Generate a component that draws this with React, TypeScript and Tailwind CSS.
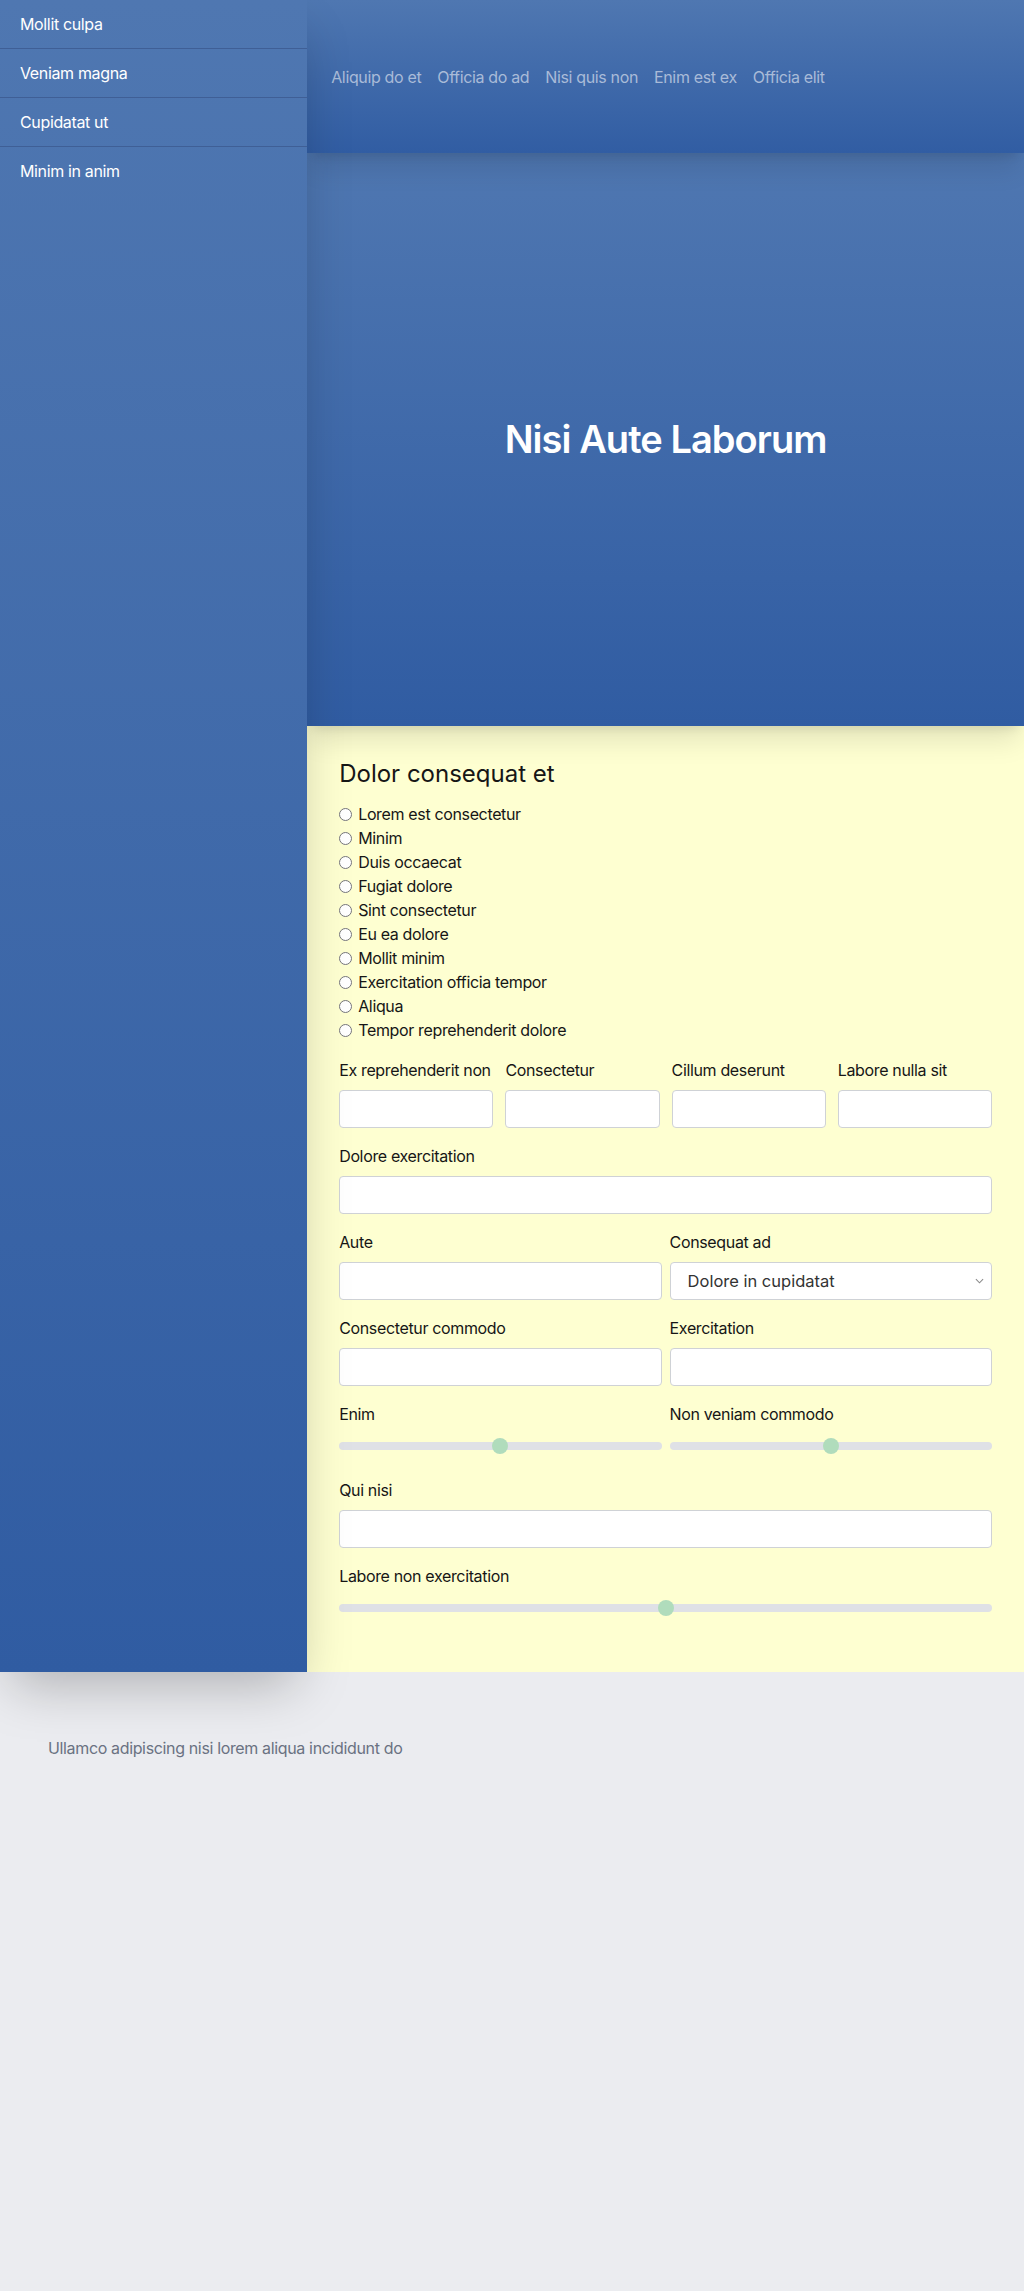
import { useState } from "react";

const sideLinks = ["Mollit culpa", "Veniam magna", "Cupidatat ut", "Minim in anim"];
const navLinks = ["Aliquip do et", "Officia do ad", "Nisi quis non", "Enim est ex", "Officia elit"];
const choices = [
  "Lorem est consectetur",
  "Minim",
  "Duis occaecat",
  "Fugiat dolore",
  "Sint consectetur",
  "Eu ea dolore",
  "Mollit minim",
  "Exercitation officia tempor",
  "Aliqua",
  "Tempor reprehenderit dolore",
];

const inputClass =
  "block h-[38px] w-full rounded border border-[#cfd2d6] bg-white px-3 text-base text-[#333] outline-none";

function Field({ label, children }: { label: string; children?: React.ReactNode }) {
  return (
    <label className="flex min-w-0 flex-col">
      <span className="whitespace-nowrap text-base leading-6 text-[#161616]">{label}</span>
      <span className="mt-2 block">{children ?? <input type="text" className={inputClass} />}</span>
    </label>
  );
}

function Slider({ label }: { label: string }) {
  const [value] = useState(50);
  return (
    <div className="flex min-w-0 flex-col pb-1">
      <span className="text-base leading-6 text-[#161616]">{label}</span>
      <div className="relative mt-2 flex h-6 items-center">
        <div className="h-2 w-full rounded-full bg-[#dfe1e6]" />
        {/* thumb sits on top of the track */}
        <div
          className="absolute top-1/2 h-4 w-4 -translate-x-1/2 -translate-y-1/2 rounded-full bg-[#b0dcbc]"
          style={{ left: `${value}%` }}
        />
      </div>
    </div>
  );
}

export default function App() {
  return (
    <div className="min-h-screen bg-[#ebecf0] font-['Inter',sans-serif] tracking-[-0.022em]">
      <div className="flex">
        <aside className="relative z-30 w-[30%] shrink-0 bg-gradient-to-b from-[#4f77b1] to-[#305ca2] shadow-2xl">
          <ul className="divide-y divide-[#3f5f96]">
            {sideLinks.map((item) => (
              <li key={item}>
                <a href="#" className="block px-5 py-3 text-base leading-6 text-white">
                  {item}
                </a>
              </li>
            ))}
          </ul>
        </aside>

        <main className="min-w-0 flex-1">
          <header className="relative z-20 flex h-[153px] items-center bg-gradient-to-b from-[#4f77b1] to-[#315da3] px-6 shadow-xl">
            <nav className="flex gap-4">
              {navLinks.map((item) => (
                <a key={item} href="#" className="text-base leading-6 text-[#a9bbd8]">
                  {item}
                </a>
              ))}
            </nav>
          </header>

          <section className="relative z-10 flex h-[573px] items-center justify-center bg-gradient-to-b from-[#4f77b1] to-[#305ca2] shadow-xl">
            <h1 className="text-[38px] font-semibold tracking-[-0.025em] text-white">Nisi Aute Laborum</h1>
          </section>

          <form className="flex flex-col gap-4 bg-[#feffd1] px-8 pb-12 pt-8">
            <div>
              <h2 className="text-2xl leading-8 tracking-normal text-[#161616]">Dolor consequat et</h2>
              <div className="mt-3 flex flex-col">
                {choices.map((c) => (
                  <label key={c} className="flex h-6 items-center gap-1.5 text-base text-[#161616]">
                    <input type="radio" name="choice" className="m-0 h-[13px] w-[13px]" />
                    {c}
                  </label>
                ))}
              </div>
            </div>

            <div className="grid grid-cols-4 gap-3">
              <Field label="Ex reprehenderit non" />
              <Field label="Consectetur" />
              <Field label="Cillum deserunt" />
              <Field label="Labore nulla sit" />
            </div>

            <Field label="Dolore exercitation" />

            <div className="grid grid-cols-2 gap-2">
              <Field label="Aute" />
              <Field label="Consequat ad">
                <span className="relative block">
                  <select
                    className="block h-[38px] w-full appearance-none rounded border border-[#cfd2d6] bg-white pl-[17px] pr-8 text-[16.5px] tracking-normal text-[#333] outline-none"
                    defaultValue="a"
                  >
                    <option value="a">Dolore in cupidatat</option>
                    <option value="b">Lorem ipsum</option>
                  </select>
                  <svg
                    viewBox="0 0 10 6"
                    className="pointer-events-none absolute right-2 top-1/2 h-[6px] w-[9px] -translate-y-1/2"
                  >
                    <path d="M1 1l4 4 4-4" fill="none" stroke="#8a8a8a" strokeWidth="1.2" />
                  </svg>
                </span>
              </Field>
            </div>

            <div className="grid grid-cols-2 gap-2">
              <Field label="Consectetur commodo" />
              <Field label="Exercitation" />
            </div>

            <div className="grid grid-cols-2 gap-2">
              <Slider label="Enim" />
              <Slider label="Non veniam commodo" />
            </div>

            <Field label="Qui nisi" />

            <Slider label="Labore non exercitation" />
          </form>
        </main>
      </div>

      <footer className="px-12 py-16">
        <p className="text-base leading-6 text-gray-500">Ullamco adipiscing nisi lorem aliqua incididunt do</p>
      </footer>
    </div>
  );
}
